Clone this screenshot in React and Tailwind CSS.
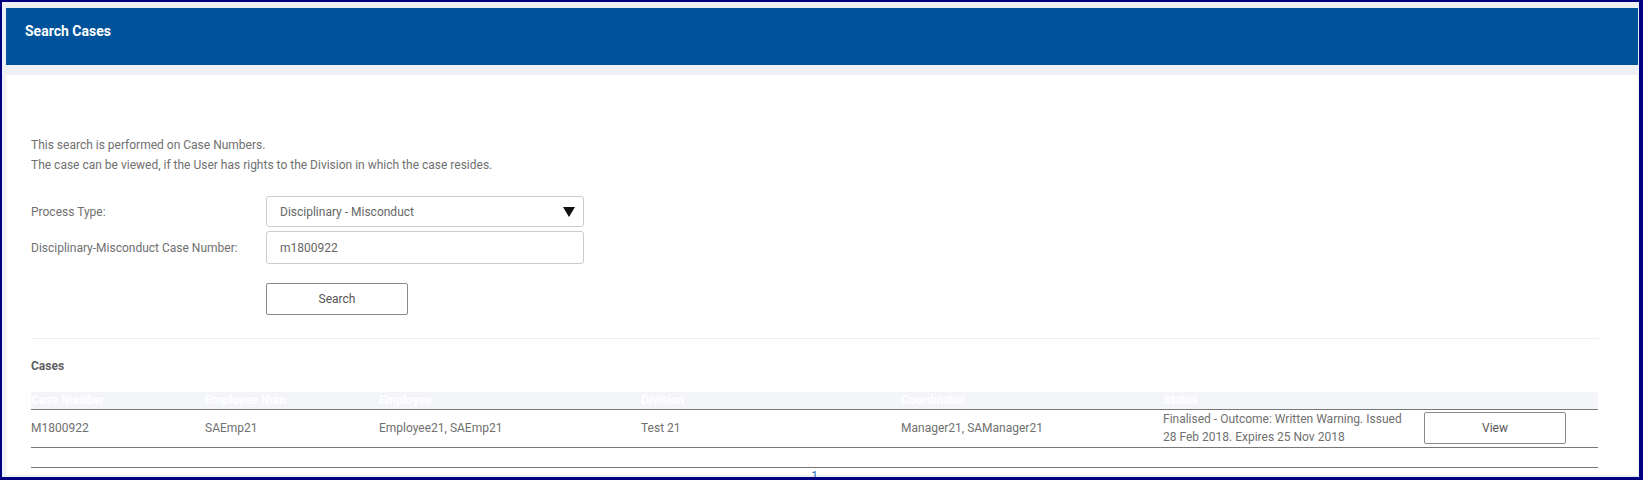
const rows = [
  {
    caseNumber: "M1800922",
    employeeNum: "SAEmp21",
    employee: "Employee21, SAEmp21",
    division: "Test 21",
    coordinator: "Manager21, SAManager21",
    status: "Finalised - Outcome: Written Warning. Issued 28 Feb 2018. Expires 25 Nov 2018",
  },
];

const App = () => {
  return (
    <div
      className="h-[480px] w-[1643px] overflow-hidden border-t-2 border-l-2 border-r-4 border-b-[3px] border-[#000080] bg-[#edf0f4] pt-[6px] pl-1 pr-px text-[12px] text-[#707070]"
      style={{ fontFamily: "Roboto, 'Liberation Sans', sans-serif" }}
    >
      {/* Header bar */}
      <div className="h-[57px] bg-[#00529b] px-[19px] pt-[14px]">
        <h1 className="text-[14px] font-bold leading-[18px] text-white">Search Cases</h1>
      </div>

      <div className="mt-[10px] h-[400px] bg-white pl-[25px] pr-[39px] pt-[60px]">
        <p className="leading-[20px]">This search is performed on Case Numbers.</p>
        <p className="leading-[20px]">
          The case can be viewed, if the User has rights to the Division in which the case resides.
        </p>

        {/* Form */}
        <div className="mt-[21px] flex items-center">
          <label className="w-[235px]">Process Type:</label>
          <div className="flex h-[31px] w-[318px] items-center justify-between rounded-[3px] border border-[#cccccc] pl-[13px] pr-[8px] text-[#666]">
            <span>Disciplinary - Misconduct</span>
            <svg width="12" height="10" viewBox="0 0 12 10">
              <path d="M0 0 L12 0 L6 10 Z" fill="#111" />
            </svg>
          </div>
        </div>
        <div className="mt-[4px] flex items-center">
          <label className="w-[235px]">Disciplinary-Misconduct Case Number:</label>
          <div className="flex h-[33px] w-[318px] items-center rounded-[3px] border border-[#cccccc] pl-[13px] text-[#666]">
            m1800922
          </div>
        </div>
        <div className="mt-[19px] pl-[235px]">
          <button className="h-[32px] w-[142px] rounded-[2px] border border-[#8a8a8a] bg-white text-[12px] text-[#555]">
            Search
          </button>
        </div>

        <div className="mt-[23px] border-t border-[#eeeeee]" />

        <h2 className="mt-[19px] font-bold leading-[16px] text-[#5f5f5f]">Cases</h2>

        {/* Results table */}
        <table className="mt-[18px] w-[1567px] table-fixed border-collapse text-left">
          <colgroup>
            <col className="w-[174px]" />
            <col className="w-[174px]" />
            <col className="w-[262px]" />
            <col className="w-[260px]" />
            <col className="w-[262px]" />
            <col className="w-[258px]" />
            <col />
          </colgroup>
          <thead>
            <tr className="h-[17px] border-b border-[#777] bg-[#f4f5f8] text-white">
              <th className="p-0 font-bold leading-[16px]">Case Number</th>
              <th className="p-0 font-bold leading-[16px]">Employee Num.</th>
              <th className="p-0 font-bold leading-[16px]">Employee</th>
              <th className="p-0 font-bold leading-[16px]">Division</th>
              <th className="p-0 font-bold leading-[16px]">Coordinator</th>
              <th className="p-0 font-bold leading-[16px]">Status</th>
              <th className="p-0" />
            </tr>
          </thead>
          <tbody>
            {rows.map((row) => (
              <tr key={row.caseNumber} className="h-[38px] border-b border-[#777]">
                <td className="p-0">{row.caseNumber}</td>
                <td className="p-0">{row.employeeNum}</td>
                <td className="p-0">{row.employee}</td>
                <td className="p-0">{row.division}</td>
                <td className="p-0">{row.coordinator}</td>
                <td className="p-0 pr-[6px] leading-[18px]">{row.status}</td>
                <td className="p-0 pl-[3px]">
                  <button className="h-[32px] w-[142px] rounded-[2px] border border-[#8a8a8a] bg-white text-[12px] text-[#555]">
                    View
                  </button>
                </td>
              </tr>
            ))}
            <tr className="h-[20px] border-b border-[#777]">
              <td colSpan={7} />
            </tr>
          </tbody>
        </table>
        <div className="w-[1567px] text-center leading-[16px] text-[#2a6ebb]">1</div>
      </div>
    </div>
  );
};

export default App;
